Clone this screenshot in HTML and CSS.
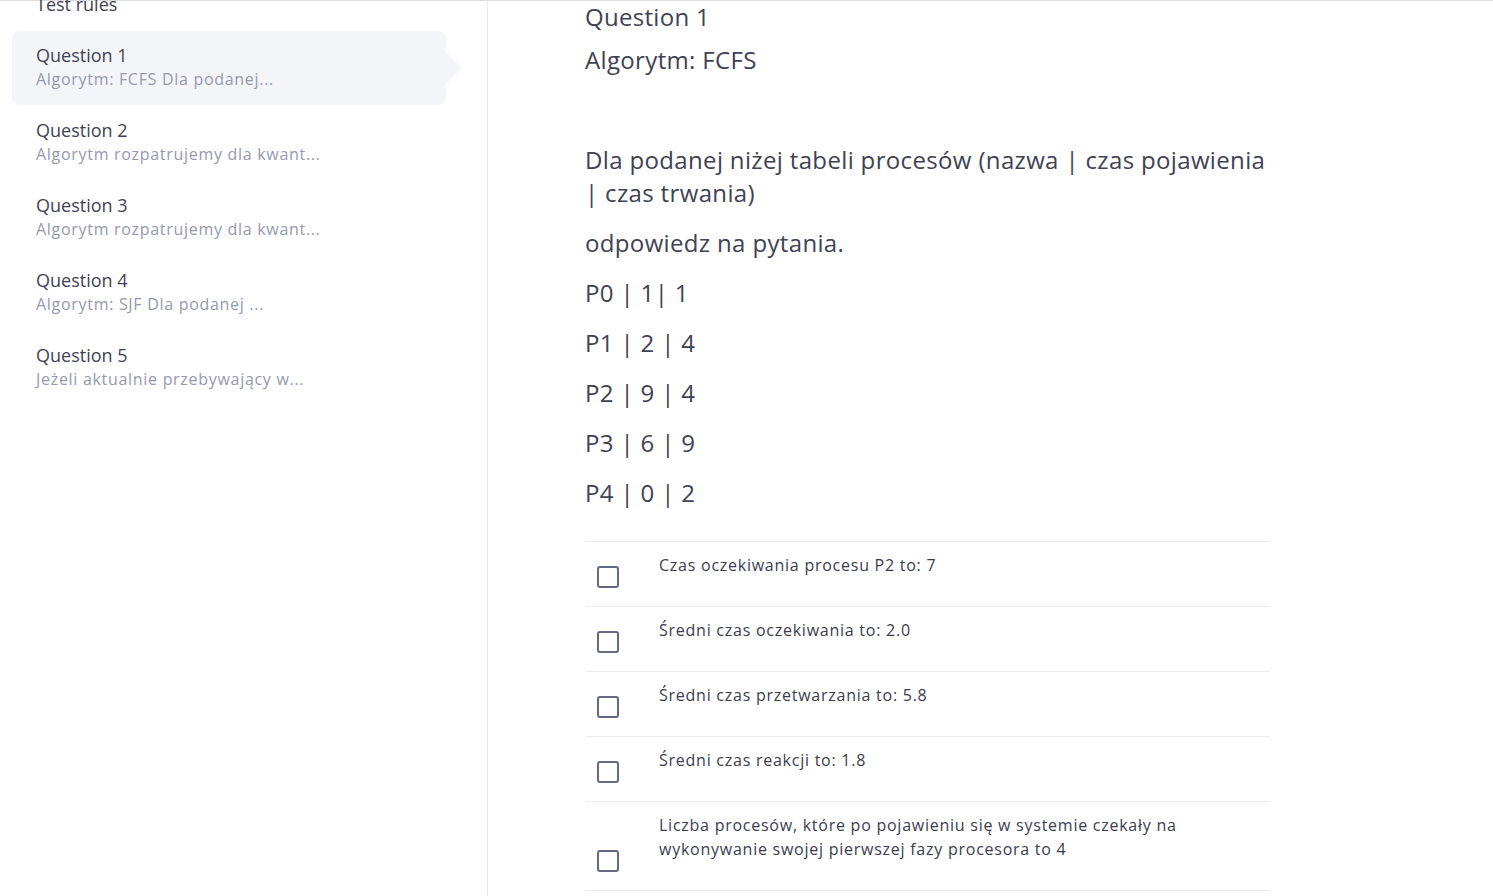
FILE: index.html
```html
<!DOCTYPE html>
<html lang="pl">
<head>
<meta charset="utf-8">
<title>Test</title>
<link rel="stylesheet" href="styles.css">
</head>
<body>
<div class="app">
  <aside class="sidebar">
    <ul class="qlist">
      <li class="qitem single"><div class="qtitle">Test rules</div></li>
      <li class="qitem active"><div class="qtitle">Question 1</div><div class="qsub">Algorytm: FCFS Dla podanej...</div></li>
      <li class="qitem"><div class="qtitle">Question 2</div><div class="qsub">Algorytm rozpatrujemy dla kwant...</div></li>
      <li class="qitem"><div class="qtitle">Question 3</div><div class="qsub">Algorytm rozpatrujemy dla kwant...</div></li>
      <li class="qitem"><div class="qtitle">Question 4</div><div class="qsub">Algorytm: SJF Dla podanej ...</div></li>
      <li class="qitem"><div class="qtitle">Question 5</div><div class="qsub">Jeżeli aktualnie przebywający w...</div></li>
    </ul>
  </aside>
  <main class="main">
    <div class="question">
      <h2 class="qhead">Question 1</h2>
      <div class="qbody">
        <p>Algorytm: FCFS</p>
        <p>&nbsp;</p>
        <p>Dla podanej niżej tabeli procesów (nazwa | czas pojawienia | czas trwania)</p>
        <p>odpowiedz na pytania.</p>
        <p>P0 | 1| 1</p>
        <p>P1 | 2 | 4</p>
        <p>P2 | 9 | 4</p>
        <p>P3 | 6 | 9</p>
        <p>P4 | 0 | 2</p>
      </div>
      <ul class="answers">
        <li class="answer"><span class="box"></span><span class="atext">Czas oczekiwania procesu P2 to: 7</span></li>
        <li class="answer"><span class="box"></span><span class="atext">Średni czas oczekiwania to: 2.0</span></li>
        <li class="answer"><span class="box"></span><span class="atext">Średni czas przetwarzania to: 5.8</span></li>
        <li class="answer"><span class="box"></span><span class="atext">Średni czas reakcji to: 1.8</span></li>
        <li class="answer"><span class="box"></span><span class="atext">Liczba procesów, które po pojawieniu się w systemie czekały na wykonywanie swojej pierwszej fazy procesora to 4</span></li>
      </ul>
    </div>
  </main>
</div>
</body>
</html>
```
FILE: styles.css
```css
* { box-sizing: border-box; }
html, body { margin: 0; padding: 0; background: #fff; }
body {
  font-family: "Open Sans", "Noto Sans", sans-serif;
  color: #3f4254;
  height: 896px;
  overflow: hidden;
}
.app {
  display: flex;
  border-top: 1px solid #dcdcdc;
  height: 896px;
}
.sidebar {
  width: 488px;
  flex: 0 0 488px;
  border-right: 1px solid #ececf0;
  padding: 0 41px 0 12px;
}
.qlist {
  list-style: none;
  margin: -15px 0 0 0;
  padding: 0;
}
.qitem {
  position: relative;
  padding: 12px 24px 13px;
  border-radius: 8px;
  margin-bottom: 1px;
}
.qitem.single { padding: 6px 24px 14px; }
.qitem.active { background: #f4f5f9; }
.qitem.active::after {
  content: "";
  position: absolute;
  right: -16px;
  top: 50%;
  margin-top: -16px;
  border-left: 16px solid #f4f5f9;
  border-top: 16px solid transparent;
  border-bottom: 16px solid transparent;
}
.qtitle {
  font-size: 18px;
  line-height: 24px;
  color: #3f4254;
}
.qsub {
  font-size: 16px;
  line-height: 25px;
  letter-spacing: 0.7px;
  color: #9699ae;
}
.main {
  flex: 1;
  padding-left: 97px;
}
.question { width: 685px; }
.qhead {
  margin: -1px 0 10px;
  font-size: 24px;
  font-weight: 400;
  line-height: 33px;
  letter-spacing: 0.3px;
  color: #3f4254;
}
.qbody p {
  margin: 0 0 17px;
  font-size: 24px;
  line-height: 33px;
  letter-spacing: 0.35px;
}
.answers {
  list-style: none;
  margin: 32px 0 0;
  padding: 0;
  border-top: 1px solid #ebebef;
}
.answer {
  display: flex;
  align-items: flex-end;
  padding: 11px 12px 29px 12px;
  border-bottom: 1px solid #ebebef;
}
.box {
  flex: 0 0 22px;
  width: 22px;
  height: 22px;
  border: 2px solid #646a86;
  border-radius: 3px;
  margin-bottom: -11px;
  margin-right: 40px;
}
.atext {
  flex: 1;
  font-size: 16px;
  line-height: 24px;
  letter-spacing: 0.75px;
  color: #3a3d4f;
}
```
